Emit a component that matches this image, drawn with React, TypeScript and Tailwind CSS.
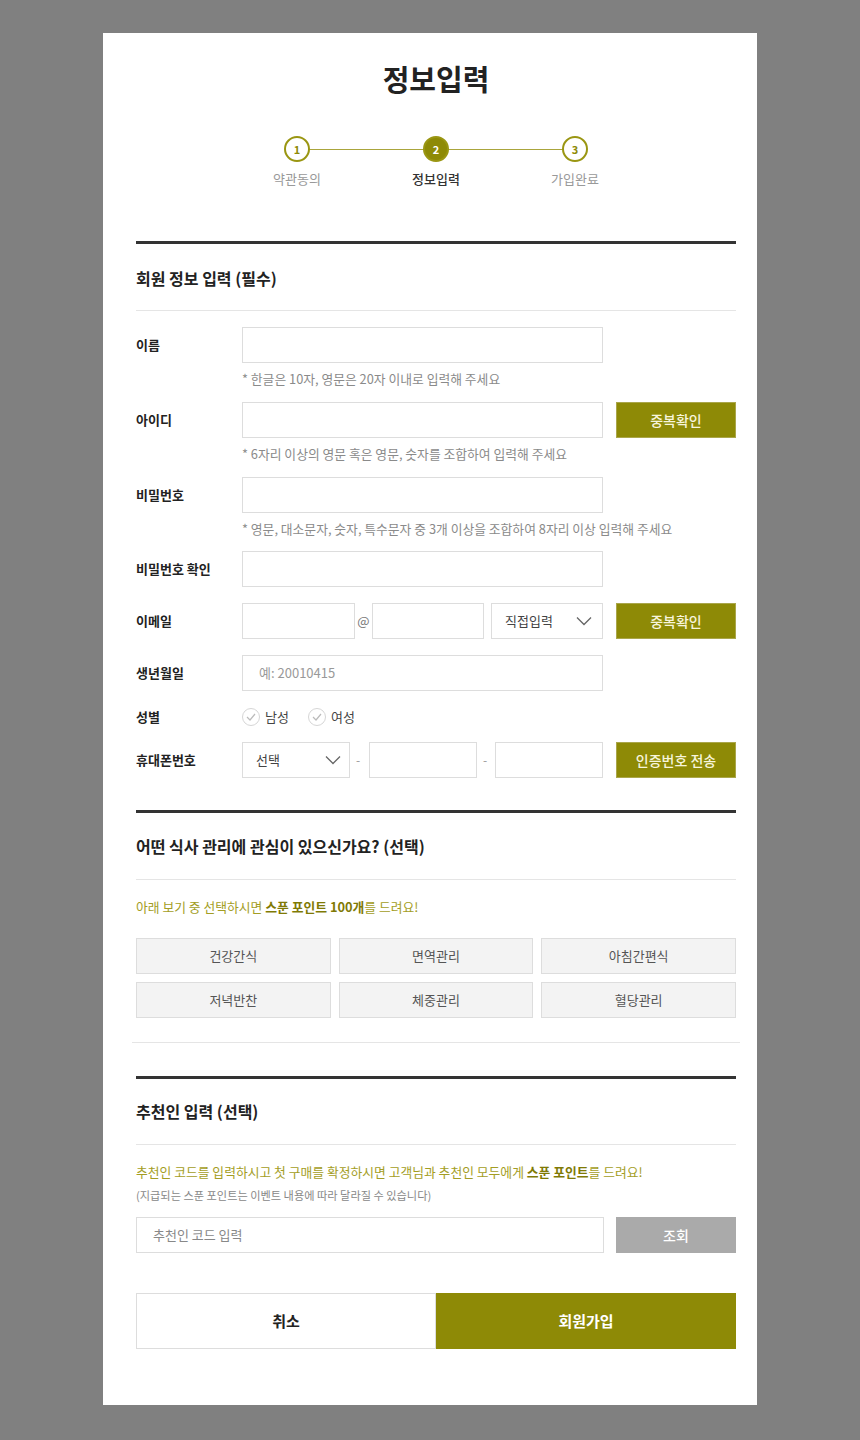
import type { ReactNode } from "react";

const font = { fontFamily: '"Noto Sans CJK KR", "Noto Sans", sans-serif' };

function Chevron() {
  return (
    <svg width="16" height="10" viewBox="0 0 16 10" fill="none" className="shrink-0">
      <polyline points="1,1.5 8,8.5 15,1.5" stroke="#666" strokeWidth="1.3" />
    </svg>
  );
}

function Check() {
  return (
    <span className="flex h-[18px] w-[18px] items-center justify-center rounded-full border border-[#d6d6d6] bg-white">
      <svg width="10" height="8" viewBox="0 0 10 8" fill="none">
        <polyline points="1,4 4,7 9,1" stroke="#bbb" strokeWidth="1.2" />
      </svg>
    </span>
  );
}

function Input({ className = "", placeholder }: { className?: string; placeholder?: string }) {
  return (
    <div
      className={`flex h-[36px] items-center border border-[#dddddd] bg-white px-[16px] text-[13px] text-[#888] ${className}`}
    >
      {placeholder}
    </div>
  );
}

function OliveButton({ children }: { children: ReactNode }) {
  return (
    <button className="flex h-[36px] w-[120px] shrink-0 items-center justify-center border border-[#aaa64a] bg-[#8e8a06] text-[14px] font-medium text-[#f7f5dc]">
      {children}
    </button>
  );
}

function Row({
  label,
  children,
  hint,
  className = "",
}: {
  label: string;
  children: ReactNode;
  hint?: string;
  className?: string;
}) {
  return (
    <div className={`flex flex-col ${className}`}>
      <div className="flex items-center">
        <div className="w-[106px] shrink-0 text-[13px] font-bold text-[#222]">{label}</div>
        {children}
      </div>
      {hint && (
        <p className="ml-[106px] mt-[8px] text-[12.8px] leading-[15px] text-[#8a8a8a]">{hint}</p>
      )}
    </div>
  );
}

const steps = [
  { n: 1, label: "약관동의" },
  { n: 2, label: "정보입력" },
  { n: 3, label: "가입완료" },
];

const interests = ["건강간식", "면역관리", "아침간편식", "저녁반찬", "체중관리", "혈당관리"];

export default function App() {
  return (
    <div className="min-h-[1440px] bg-[#808080] pt-[33px]" style={font}>
      <div className="ml-[103px] w-[654px] bg-white pb-[56px] pl-[33px] pr-[21px]">
        {/* Title */}
        <h1 className="pt-[25px] text-center text-[29px] font-bold leading-[40px] text-[#222]">정보입력</h1>

        {/* Steps */}
        <div className="mt-[38px] flex justify-center">
          {steps.map((s, i) => (
            <div key={s.n} className="relative flex w-[139px] flex-col items-center">
              {i > 0 && <div className="absolute right-1/2 top-[13px] h-px w-[139px] bg-[#aaa53c]" />}
              <div
                className={`relative z-10 flex h-[26px] w-[26px] items-center justify-center rounded-full border-2 border-[#9a9612] text-[11px] font-bold ${
                  s.n === 2 ? "bg-[#8e8a06] text-white" : "bg-white text-[#8e8a06]"
                }`}
              >
                {s.n}
              </div>
              <span
                className={`mt-[8px] text-[13px] leading-[18px] ${
                  s.n === 2 ? "font-medium text-[#333]" : "text-[#999]"
                }`}
              >
                {s.label}
              </span>
            </div>
          ))}
        </div>

        {/* Section 1 */}
        <div className="mt-[53px] h-[3px] bg-[#333]" />
        <h2 className="pt-[22px] text-[16px] font-bold leading-[24px] text-[#222]">회원 정보 입력 (필수)</h2>
        <div className="mt-[20px] h-px bg-[#e5e5e5]" />

        <div className="mt-[16px] flex flex-col">
          <Row label="이름" hint="* 한글은 10자, 영문은 20자 이내로 입력해 주세요">
            <Input className="w-[361px]" />
          </Row>
          <Row
            className="mt-[16px]"
            label="아이디"
            hint="* 6자리 이상의 영문 혹은 영문, 숫자를 조합하여 입력해 주세요"
          >
            <Input className="w-[361px]" />
            <div className="ml-[13px]">
              <OliveButton>중복확인</OliveButton>
            </div>
          </Row>
          <Row
            className="mt-[16px]"
            label="비밀번호"
            hint="* 영문, 대소문자, 숫자, 특수문자 중 3개 이상을 조합하여 8자리 이상 입력해 주세요"
          >
            <Input className="w-[361px]" />
          </Row>
          <Row className="mt-[15px]" label="비밀번호 확인">
            <Input className="w-[361px]" />
          </Row>
          <Row className="mt-[16px]" label="이메일">
            <Input className="w-[113px]" />
            <span className="w-[17px] text-center text-[13px] text-[#777]">@</span>
            <Input className="w-[112px]" />
            <div className="ml-[7px] flex h-[36px] w-[112px] items-center justify-between border border-[#dddddd] pl-[13px] pr-[10px] text-[13px] text-[#444]">
              직접입력
              <Chevron />
            </div>
            <div className="ml-[13px]">
              <OliveButton>중복확인</OliveButton>
            </div>
          </Row>
          <Row className="mt-[16px]" label="생년월일">
            <Input className="w-[361px] text-[#999]" placeholder="예: 20010415" />
          </Row>
          <Row className="mt-[16px]" label="성별">
            <div className="flex h-[20px] items-center text-[13px] text-[#444]">
              <Check />
              <span className="ml-[5px]">남성</span>
              <span className="ml-[19px]">
                <Check />
              </span>
              <span className="ml-[5px]">여성</span>
            </div>
          </Row>
          <Row className="mt-[15px]" label="휴대폰번호">
            <div className="flex h-[36px] w-[108px] items-center justify-between border border-[#dddddd] pl-[13px] pr-[8px] text-[13px] text-[#444]">
              선택
              <Chevron />
            </div>
            <span className="w-[19px] pl-[6px] text-[12px] text-[#999]">-</span>
            <Input className="w-[108px]" />
            <span className="w-[18px] pl-[6px] text-[12px] text-[#999]">-</span>
            <Input className="w-[108px]" />
            <div className="ml-[13px]">
              <OliveButton>인증번호 전송</OliveButton>
            </div>
          </Row>
        </div>

        {/* Section 2 */}
        <div className="mt-[32px] h-[3px] bg-[#333]" />
        <h2 className="pt-[21px] text-[16px] font-bold leading-[24px] text-[#222]">
          어떤 식사 관리에 관심이 있으신가요? (선택)
        </h2>
        <div className="mt-[21px] h-px bg-[#e5e5e5]" />
        <p className="mt-[18px] text-[12.8px] leading-[18px] text-[#a39d24]">
          아래 보기 중 선택하시면 <b className="font-bold text-[#7f7a05]">스푼 포인트 100개</b>를 드려요!
        </p>
        <div className="mt-[22px] grid grid-cols-3 gap-[8px]">
          {interests.map((t) => (
            <button
              key={t}
              className="flex h-[36px] items-center justify-center border border-[#dddddd] bg-[#f3f3f3] text-[13px] text-[#555]"
            >
              {t}
            </button>
          ))}
        </div>
        <div className="-mx-[4px] mt-[24px] h-px bg-[#e5e5e5]" />

        {/* Section 3 */}
        <div className="mt-[33px] h-[3px] bg-[#333]" />
        <h2 className="pt-[20px] text-[16px] font-bold leading-[24px] text-[#222]">추천인 입력 (선택)</h2>
        <div className="mt-[21px] h-px bg-[#e5e5e5]" />
        <p className="mt-[18px] text-[12.8px] leading-[18px] text-[#a39d24]">
          추천인 코드를 입력하시고 첫 구매를 확정하시면 고객님과 추천인 모두에게{" "}
          <b className="font-bold text-[#7f7a05]">스푼 포인트</b>를 드려요!
        </p>
        <p className="mt-[6px] text-[11.2px] leading-[16px] text-[#888]">
          (지급되는 스푼 포인트는 이벤트 내용에 따라 달라질 수 있습니다)
        </p>
        <div className="mt-[14px] flex items-center">
          <Input className="w-[468px]" placeholder="추천인 코드 입력" />
          <button className="ml-[12px] flex h-[36px] w-[120px] items-center justify-center bg-[#aaaaaa] text-[14px] font-medium text-white">
            조회
          </button>
        </div>

        {/* Actions */}
        <div className="mt-[40px] flex">
          <button className="flex h-[56px] w-1/2 items-center justify-center border border-[#dddddd] bg-white text-[15px] font-bold text-[#222]">
            취소
          </button>
          <button className="flex h-[56px] w-1/2 items-center justify-center bg-[#8e8a06] text-[15px] font-bold text-white">
            회원가입
          </button>
        </div>
      </div>
    </div>
  );
}
